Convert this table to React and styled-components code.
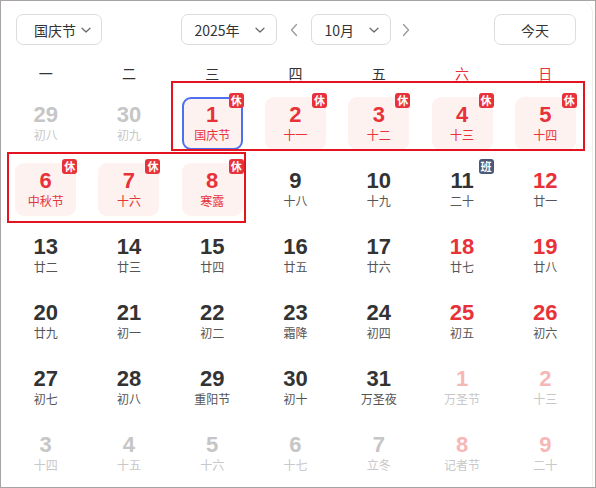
import React from 'react'
import styled, { createGlobalStyle } from 'styled-components'

const GlobalStyle = createGlobalStyle`
  html, body {
    margin: 0;
    padding: 0;
    background: #fff;
  }
  body {
    font-family: "Noto Sans CJK SC", "Liberation Sans", sans-serif;
  }
`

const RED = '#e8323a'

const Frame = styled.div`
  position: relative;
  width: 596px;
  height: 488px;
  box-sizing: border-box;
  border: 1px solid #a8a4a4;
  background: #fff;
  overflow: hidden;
`

const Panel = styled.div`
  height: 100%;
  margin-right: 2px;
  border-right: 1px solid #efefef;
  border-top-right-radius: 12px;
`

const Toolbar = styled.div`
  display: flex;
  align-items: center;
  padding: 13px 16px 0 15px;
  height: 31px;
`

const Center = styled.div`
  flex: 1;
  display: flex;
  align-items: center;
  justify-content: center;
  padding-left: 5px;
`

const Select = styled.div`
  box-sizing: border-box;
  display: flex;
  align-items: center;
  justify-content: space-between;
  height: 31px;
  width: ${({ w }) => w}px;
  padding: 0 ${({ pr }) => pr || 10}px 0 ${({ pl }) => pl || 13}px;
  border: 1px solid #dcdcdc;
  border-radius: 7px;
  font-size: 14px;
  color: #333;
  background: #fff;
`

const Label = styled.span`
  line-height: 1;
`

const Arrow = styled.span`
  display: flex;
  align-items: center;
  justify-content: center;
  width: ${({ w }) => w}px;
  color: #999;
`

const TodayBtn = styled.div`
  box-sizing: border-box;
  width: 82px;
  height: 31px;
  display: flex;
  align-items: center;
  justify-content: center;
  border: 1px solid #dcdcdc;
  border-radius: 7px;
  font-size: 14px;
  color: #333;
`

const Board = styled.div`
  padding: 0 5px 0 3px;
`

const Weekdays = styled.div`
  display: grid;
  grid-template-columns: repeat(7, 1fr);
  margin-top: 11px;
  height: 34px;
`

const Weekday = styled.div`
  text-align: center;
  line-height: 34px;
  font-size: 14px;
  color: ${({ red }) => (red ? RED : '#333')};
`

const Days = styled.div`
  display: grid;
  grid-template-columns: repeat(7, 1fr);
  grid-auto-rows: 66px;
`

const Slot = styled.div`
  display: flex;
  align-items: center;
  justify-content: center;
`

const Cell = styled.div`
  position: relative;
  box-sizing: border-box;
  width: 61px;
  height: 53px;
  border-radius: 9px;
  display: flex;
  flex-direction: column;
  align-items: center;
  justify-content: center;
  background: ${({ bg }) => (bg ? '#fdf2f0' : 'transparent')};
  border: ${({ today }) => (today ? '2px solid #4d6ff0' : 'none')};
`

const Num = styled.div`
  font-family: "Liberation Sans", Arial, sans-serif;
  font-weight: 700;
  font-size: 22px;
  line-height: 22px;
  color: ${({ c }) => c};
`

const Lunar = styled.div`
  font-size: 12px;
  line-height: 16px;
  margin-top: 1px;
  color: ${({ c }) => c};
`

const Badge = styled.div`
  position: absolute;
  top: ${({ today }) => (today ? -6 : -4)}px;
  right: ${({ today }) => (today ? -3 : -1)}px;
  width: 15px;
  height: 15px;
  border-radius: 3px;
  background: ${({ work }) => (work ? '#4b5878' : RED)};
  color: #fff;
  font-size: 11px;
  font-weight: 700;
  line-height: 15px;
  text-align: center;
`

const Mark = styled.div`
  position: absolute;
  box-sizing: border-box;
  border: 2px solid #e3141f;
  pointer-events: none;
`

const Chevron = () => (
  <svg width="12" height="12" viewBox="0 0 12 12" fill="none">
    <path d="M2 4.2 L6 8 L10 4.2" stroke="#666" strokeWidth="1.2" strokeLinecap="round" strokeLinejoin="round" />
  </svg>
)

const Side = ({ dir }) => (
  <svg width="8" height="14" viewBox="0 0 8 14" fill="none">
    <path
      d={dir === 'left' ? 'M6.5 1.5 L1.5 7 L6.5 12.5' : 'M1.5 1.5 L6.5 7 L1.5 12.5'}
      stroke="#9a9a9a"
      strokeWidth="1.3"
      strokeLinecap="round"
      strokeLinejoin="round"
    />
  </svg>
)

// kind: o = other month, ow = other month weekend, n = normal, w = weekend, h = holiday
const cells = [
  ['29', '初八', 'o'], ['30', '初九', 'o'],
  ['1', '国庆节', 'h', 'rest', true], ['2', '十一', 'h', 'rest'], ['3', '十二', 'h', 'rest'], ['4', '十三', 'h', 'rest'], ['5', '十四', 'h', 'rest'],
  ['6', '中秋节', 'h', 'rest'], ['7', '十六', 'h', 'rest'], ['8', '寒露', 'h', 'rest'], ['9', '十八', 'n'], ['10', '十九', 'n'], ['11', '二十', 'n', 'work'], ['12', '廿一', 'w'],
  ['13', '廿二', 'n'], ['14', '廿三', 'n'], ['15', '廿四', 'n'], ['16', '廿五', 'n'], ['17', '廿六', 'n'], ['18', '廿七', 'w'], ['19', '廿八', 'w'],
  ['20', '廿九', 'n'], ['21', '初一', 'n'], ['22', '初二', 'n'], ['23', '霜降', 'n'], ['24', '初四', 'n'], ['25', '初五', 'w'], ['26', '初六', 'w'],
  ['27', '初七', 'n'], ['28', '初八', 'n'], ['29', '重阳节', 'n'], ['30', '初十', 'n'], ['31', '万圣夜', 'n'], ['1', '万圣节', 'ow'], ['2', '十三', 'ow'],
  ['3', '十四', 'o'], ['4', '十五', 'o'], ['5', '十六', 'o'], ['6', '十七', 'o'], ['7', '立冬', 'o'], ['8', '记者节', 'ow'], ['9', '二十', 'ow'],
]

const numColor = {
  o: '#c6c6c6',
  ow: '#f6b7b7',
  n: '#333',
  w: RED,
  h: RED,
}

const lunarColor = {
  o: '#c8c8c8',
  ow: '#c8c8c8',
  n: '#555',
  w: '#555',
  h: RED,
}

const weekdays = ['一', '二', '三', '四', '五', '六', '日']

export default function App() {
  return (
    <>
      <GlobalStyle />
      <Frame>
        <Panel>
          <Toolbar>
            <Select w={86} pl={17} pr={9}>
              <Label>国庆节</Label>
              <Chevron />
            </Select>
            <Center>
              <Select w={96}>
                <Label>2025年</Label>
                <Chevron />
              </Select>
              <Arrow w={34}><Side dir="left" /></Arrow>
              <Select w={80}>
                <Label>10月</Label>
                <Chevron />
              </Select>
              <Arrow w={30}><Side dir="right" /></Arrow>
            </Center>
            <TodayBtn>今天</TodayBtn>
          </Toolbar>
          <Board>
            <Weekdays>
              {weekdays.map((d, i) => (
                <Weekday key={d} red={i > 4}>{d}</Weekday>
              ))}
            </Weekdays>
            <Days>
              {cells.map(([d, lunar, kind, badge, today], i) => (
                <Slot key={i}>
                  <Cell bg={kind === 'h'} today={today}>
                    <Num c={numColor[kind]}>{d}</Num>
                    <Lunar c={lunarColor[kind]}>{lunar}</Lunar>
                    {badge && (
                      <Badge work={badge === 'work'} today={today}>
                        {badge === 'work' ? '班' : '休'}
                      </Badge>
                    )}
                  </Cell>
                </Slot>
              ))}
            </Days>
          </Board>
        </Panel>
        <Mark style={{ left: 170, top: 80, width: 414, height: 70 }} />
        <Mark style={{ left: 6, top: 151, width: 239, height: 71 }} />
      </Frame>
    </>
  )
}
